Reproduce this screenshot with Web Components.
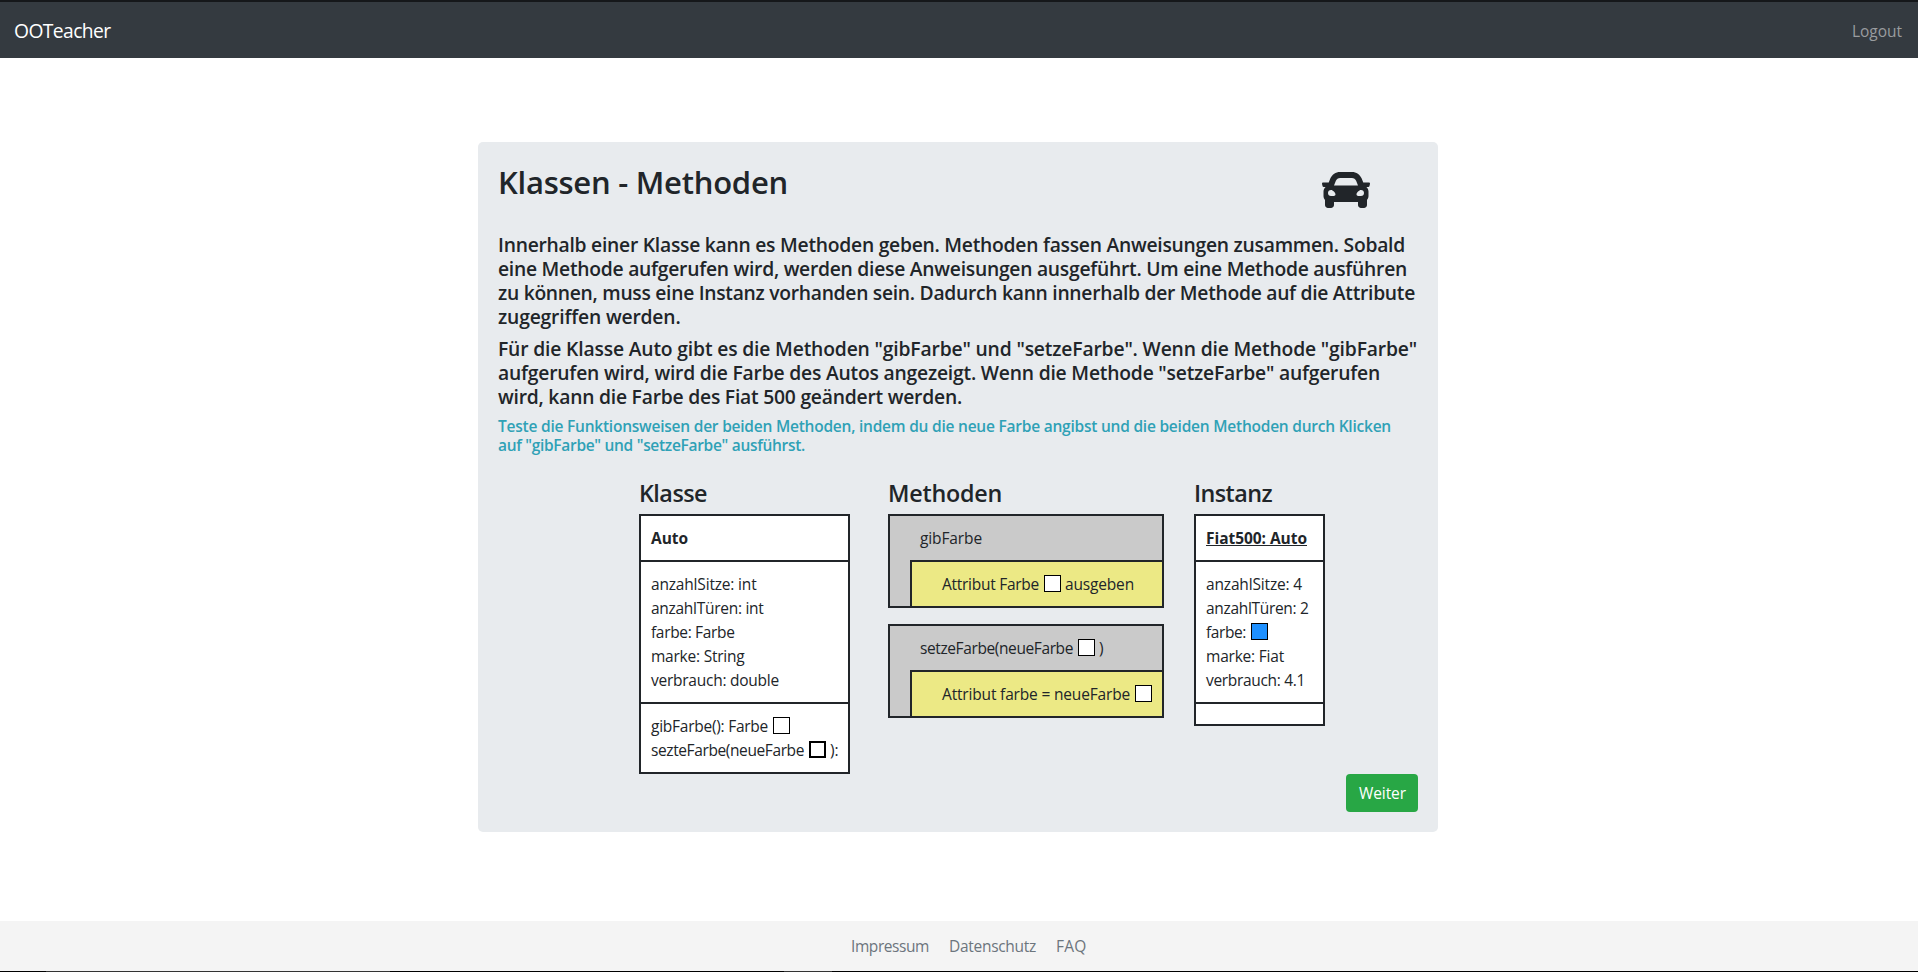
<!DOCTYPE html>
<html lang="de">
<head>
<meta charset="utf-8">
<title>OOTeacher</title>
<style>
html,body{margin:0;height:100%;background:#fff}
body{font-family:"Open Sans","Noto Sans",sans-serif;font-size:15.5px;line-height:24px;color:#212529}
</style>
</head>
<body>
<oo-app></oo-app>
<script>
const define = (name, html) => customElements.define(name, class extends HTMLElement {
  constructor() {
    super();
    this.attachShadow({ mode: 'open' }).innerHTML = html;
  }
});

/* One line of text, tracked so that it fills the advance width given in "w". */
customElements.define('fit-text', class extends HTMLElement {
  connectedCallback() {
    if (this.shadowRoot) return;
    this.attachShadow({ mode: 'open' }).innerHTML =
      '<style>:host{display:block;white-space:pre;flex:none}span{display:inline-block}:host([underline]) span{text-decoration:underline;text-decoration-thickness:1px;text-underline-offset:1px;text-decoration-skip-ink:none}</style><span><slot></slot></span>';
    queueMicrotask(() => {
      const span = this.shadowRoot.querySelector('span');
      const w = +this.getAttribute('w');
      const natural = span.getBoundingClientRect().width;
      this.style.letterSpacing = ((w - natural) / this.textContent.length).toFixed(4) + 'px';
      this.style.width = w + 'px';
    });
  }
});

define('color-swatch', `<style>
:host{display:block;flex:none;box-sizing:border-box;width:17px;height:17px;border:1px solid #000;background:#fff;margin:0 4px 0 5px}
:host([bold]){border-width:2px}
:host([blue]){background:#1e90ff}
</style>`);

define('text-row', `<style>:host{display:flex;height:24px}::slotted(color-swatch){margin-top:3px}</style><slot></slot>`);

define('nav-bar', `<style>
:host{display:flex;justify-content:space-between;align-items:center;box-sizing:border-box;height:58px;padding:2px 16px 0 14px;background:#343a40;border-top:2px solid #15171a;flex:none}
.brand{color:#fff;font-size:19.3px}
.link{color:#999c9f}
</style><fit-text class="brand" w="96.5">OOTeacher</fit-text><fit-text class="link" w="50">Logout</fit-text>`);

define('site-footer', `<style>
:host{display:flex;flex-direction:column;box-sizing:border-box;height:51px;flex:none;background:#f4f4f4;color:#6c757d}
nav{display:flex;flex:1;padding:13px 0 0 851px;gap:20px}
.edge{height:1px;background:linear-gradient(90deg,#000 46px,#333 46px 390px,#000 390px 784px,#333 784px 832px,#000 832px)}
</style><nav><fit-text w="78">Impressum</fit-text><fit-text w="87">Datenschutz</fit-text><fit-text w="30.5">FAQ</fit-text></nav><div class="edge"></div>`);

define('car-icon', `<style>:host{display:block;width:48px;height:48px}svg{display:block}</style>
<svg width="48" height="48" viewBox="0 0 512 512" fill="#212529"><path d="M499.99 176h-59.87l-16.64-41.6C406.38 91.63 365.57 64 319.5 64h-127c-46.06 0-86.88 27.63-103.99 70.4L71.87 176H12.01C4.2 176-1.53 183.34.37 190.91l6 24C7.7 220.25 12.5 224 18.01 224h20.07C24.65 235.73 16 252.78 16 272v48c0 16.12 6.16 30.67 16 41.93V416c0 17.67 14.33 32 32 32h32c17.67 0 32-14.33 32-32v-32h256v32c0 17.67 14.33 32 32 32h32c17.67 0 32-14.33 32-32v-54.07c9.84-11.25 16-25.8 16-41.93v-48c0-19.22-8.65-36.27-22.07-48H494c5.51 0 10.31-3.75 11.64-9.09l6-24c1.89-7.57-3.84-14.91-11.65-14.91zm-352.06-17.83c7.29-18.22 24.94-30.17 44.57-30.17h127c19.63 0 37.28 11.95 44.57 30.17L384 208H128l19.93-49.83zM96 319.8c-19.2 0-32-12.76-32-31.9S76.8 256 96 256s48 28.71 48 47.85-28.8 15.95-48 15.95zm320 0c-19.2 0-48 3.19-48-15.95S396.8 256 416 256s32 12.76 32 31.9-12.8 31.9-32 31.9z"/></svg>`);

define('diagram-column', `<style>
:host{display:block;flex:none}
.head{font-size:23.3px;line-height:28px;font-weight:600;padding:1px 0 7px}
</style><div class="head"><slot name="head"></slot></div><slot></slot>`);

define('uml-box', `<style>
:host{display:block;box-sizing:border-box;border:2px solid #212529;background:#fff}
section{padding:10px;border-top:2px solid #212529}
section:first-of-type{border-top:0}
.name{font-weight:700}
</style><section class="name"><slot name="name"></slot></section><section><slot></slot></section><section><slot name="methods"></slot></section>`);

define('method-block', `<style>
:host{display:block;box-sizing:border-box;width:276px;border:2px solid #212529;background:#cacaca;margin-bottom:16px}
.sig{padding:10px 30px}
.body{margin-left:20px;border:solid #212529;border-width:2px 0 0 2px;background:#ece985;padding:10px 0 10px 30px}
</style><div class="sig"><slot name="sig"></slot></div><div class="body"><slot></slot></div>`);

define('go-button', `<style>
:host{display:flex;box-sizing:border-box;width:72px;height:38px;border-radius:4px;background:#28a745;color:#fff;padding:7px 13px}
</style><slot></slot>`);

define('lesson-card', `<style>
:host{display:block;box-sizing:border-box;width:960px;height:690px;padding:20px;background:#e8ebee;border-radius:5px}
header{display:flex;justify-content:space-between;height:71px;padding-right:48px}
h1{margin:1px 0 0;font-size:31px;line-height:38px;font-weight:600}
car-icon{margin-top:4px}
.p{font-size:19.3px;font-weight:600;line-height:24px;margin-bottom:8px}
.hint{font-size:15.5px;font-weight:600;line-height:19.2px;color:#2fa1b6;height:38px;margin-bottom:23px}
.cols{display:flex;align-items:flex-start;margin-left:141px;height:296px}
.m{margin:0 30px 0 38px}
footer{display:flex;justify-content:flex-end}
</style>
<header><h1><fit-text w="290">Klassen - Methoden</fit-text></h1><car-icon></car-icon></header>
<div class="p"><fit-text w="907">Innerhalb einer Klasse kann es Methoden geben. Methoden fassen Anweisungen zusammen. Sobald</fit-text><fit-text w="909">eine Methode aufgerufen wird, werden diese Anweisungen ausgeführt. Um eine Methode ausführen</fit-text><fit-text w="917">zu können, muss eine Instanz vorhanden sein. Dadurch kann innerhalb der Methode auf die Attribute</fit-text><fit-text w="182.5">zugegriffen werden.</fit-text></div>
<div class="p"><fit-text w="919">Für die Klasse Auto gibt es die Methoden "gibFarbe" und "setzeFarbe". Wenn die Methode "gibFarbe"</fit-text><fit-text w="882">aufgerufen wird, wird die Farbe des Autos angezeigt. Wenn die Methode "setzeFarbe" aufgerufen</fit-text><fit-text w="464">wird, kann die Farbe des Fiat 500 geändert werden.</fit-text></div>
<div class="hint"><fit-text w="893">Teste die Funktionsweisen der beiden Methoden, indem du die neue Farbe angibst und die beiden Methoden durch Klicken</fit-text><fit-text w="307">auf "gibFarbe" und "setzeFarbe" ausführst.</fit-text></div>
<div class="cols">
<diagram-column><fit-text slot="head" w="68">Klasse</fit-text>
<uml-box style="width:211px"><fit-text slot="name" w="37">Auto</fit-text>
<fit-text w="105.5">anzahlSitze: int</fit-text><fit-text w="112.5">anzahlTüren: int</fit-text><fit-text w="83.5">farbe: Farbe</fit-text><fit-text w="93.5">marke: String</fit-text><fit-text w="128">verbrauch: double</fit-text>
<text-row slot="methods"><fit-text w="117">gibFarbe(): Farbe</fit-text><color-swatch></color-swatch></text-row>
<text-row slot="methods"><fit-text w="153">sezteFarbe(neueFarbe</fit-text><color-swatch bold></color-swatch><fit-text w="8.5">):</fit-text></text-row>
</uml-box></diagram-column>
<diagram-column class="m"><fit-text slot="head" w="114">Methoden</fit-text>
<method-block><fit-text slot="sig" w="62">gibFarbe</fit-text>
<text-row><fit-text w="97">Attribut Farbe</fit-text><color-swatch></color-swatch><fit-text w="69">ausgeben</fit-text></text-row></method-block>
<method-block><text-row slot="sig"><fit-text w="153">setzeFarbe(neueFarbe</fit-text><color-swatch></color-swatch><fit-text w="5">)</fit-text></text-row>
<text-row><fit-text w="188">Attribut farbe = neueFarbe</fit-text><color-swatch></color-swatch></text-row></method-block>
</diagram-column>
<diagram-column><fit-text slot="head" w="78">Instanz</fit-text>
<uml-box style="width:131px"><fit-text slot="name" underline w="101">Fiat500: Auto</fit-text>
<fit-text w="96">anzahlSitze: 4</fit-text><fit-text w="102.5">anzahlTüren: 2</fit-text><text-row><fit-text w="40">farbe:</fit-text><color-swatch blue></color-swatch></text-row><fit-text w="78">marke: Fiat</fit-text><fit-text w="99">verbrauch: 4.1</fit-text>
</uml-box></diagram-column>
</div>
<footer><go-button><fit-text w="47">Weiter</fit-text></go-button></footer>`);

define('oo-app', `<style>
:host{display:flex;flex-direction:column;height:972px;overflow:hidden}
main{flex:1;padding:84px 0 0 478px}
</style><nav-bar></nav-bar><main><lesson-card></lesson-card></main><site-footer></site-footer>`);
</script>
</body>
</html>
